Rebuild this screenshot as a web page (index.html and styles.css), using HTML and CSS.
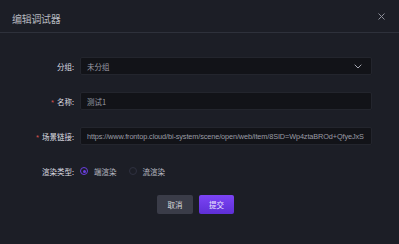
FILE: index.html
```html
<!DOCTYPE html>
<html lang="zh">
<head>
<meta charset="utf-8">
<title>编辑调试器</title>
<link rel="stylesheet" href="styles.css">
</head>
<body>
<div class="dialog">
  <div class="header">
    <span class="title">编辑调试器</span>
    <svg class="close" width="7" height="7" viewBox="0 0 7 7"><path d="M0.5 0.5L6.5 6.5M6.5 0.5L0.5 6.5" stroke="#8d8f99" stroke-width="1"/></svg>
  </div>
  <div class="form">
    <div class="row">
      <label class="label">分组:</label>
      <div class="control select">
        <span class="value">未分组</span>
        <svg class="chev" width="8" height="5" viewBox="0 0 8 5"><path d="M0.7 0.7L4 4L7.3 0.7" fill="none" stroke="#a6a8b2" stroke-width="1"/></svg>
      </div>
    </div>
    <div class="row">
      <label class="label"><span class="req">*</span>名称:</label>
      <div class="control input"><span class="value">测试1</span></div>
    </div>
    <div class="row">
      <label class="label"><span class="req">*</span>场景链接:</label>
      <div class="control input"><span class="value url">https://www.frontop.cloud/bi-system/scene/open/web/item/8SID=Wp4ztaBROd+QfyeJxS</span></div>
    </div>
    <div class="row">
      <label class="label">渲染类型:</label>
      <div class="radios">
        <span class="radio checked"><span class="dot"></span></span><span class="rtext">端渲染</span>
        <span class="radio"></span><span class="rtext">流渲染</span>
      </div>
    </div>
    <div class="actions">
      <button class="btn cancel">取消</button>
      <button class="btn submit">提交</button>
    </div>
  </div>
</div>
</body>
</html>
```
FILE: styles.css
```css
* { box-sizing: border-box; }
html, body { margin: 0; padding: 0; }
body {
  width: 399px;
  height: 244px;
  background: #1c1e26;
  font-family: "Noto Sans CJK SC", "Liberation Sans", sans-serif;
  overflow: hidden;
}
.dialog {
  width: 399px;
  height: 244px;
  background: #1c1e26;
}
.header {
  height: 33px;
  border-bottom: 1px solid #2e313b;
  display: flex;
  align-items: flex-start;
  justify-content: space-between;
  padding: 12px 14px 0 12px;
}
.title {
  font-size: 10px;
  line-height: 13px;
  color: #b4b6be;
  letter-spacing: -0.3px;
}
.close { margin-top: 1px; }
.form {
  padding-top: 24px;
  display: flex;
  flex-direction: column;
  gap: 17px;
}
.row {
  display: grid;
  grid-template-columns: 74px 292px;
  column-gap: 6px;
  align-items: center;
  height: 18px;
}
.label {
  text-align: right;
  font-size: 7.5px;
  color: #dcdde2;
  white-space: nowrap;
}
.req {
  color: #d9534f;
  margin-right: 3px;
  font-family: "Liberation Sans", sans-serif;
}
.control {
  height: 18px;
  background: #121318;
  border: 1px solid #23252d;
  border-radius: 2px;
  display: flex;
  align-items: center;
  padding: 0 6px;
  overflow: hidden;
}
.select { justify-content: space-between; }
.value {
  font-size: 7.5px;
  color: #9a9ca5;
  white-space: nowrap;
}
.url {
  font-family: "Liberation Sans", sans-serif;
  font-size: 7.3px;
  letter-spacing: -0.1px;
}
.chev { margin-right: 3px; }
.radios {
  display: flex;
  align-items: center;
}
.radio {
  width: 8px;
  height: 8px;
  border-radius: 50%;
  border: 1px solid #2f3140;
  display: inline-flex;
  align-items: center;
  justify-content: center;
}
.radio.checked { border-color: #6a3ee0; }
.dot {
  width: 3px;
  height: 3px;
  border-radius: 50%;
  background: #6a3ee0;
}
.rtext {
  font-size: 7.5px;
  color: #b8bac2;
  margin-left: 6px;
  margin-right: 12px;
}
.actions {
  display: flex;
  justify-content: center;
  gap: 6px;
  padding-right: 8px;
  margin-top: -2px;
}
.btn {
  height: 19px;
  width: 36px;
  border: none;
  border-radius: 2px;
  font-family: "Noto Sans CJK SC", sans-serif;
  font-size: 7.5px;
  padding: 0;
}
.cancel {
  background: #3a3c48;
  color: #d8d9de;
}
.submit {
  width: 35px;
  background: linear-gradient(180deg, #7c44f5 0%, #5e2fd6 100%);
  color: #ece6ff;
}
```
